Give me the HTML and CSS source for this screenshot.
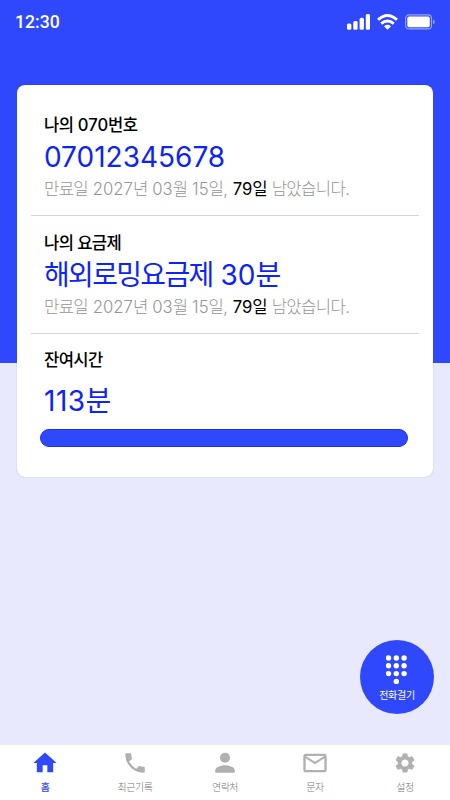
FILE: index.html
```
<!DOCTYPE html>
<html lang="ko">
<head>
<meta charset="utf-8">
<meta name="viewport" content="width=device-width, initial-scale=1">
<title>홈</title>
<link rel="stylesheet" href="styles.css">
</head>
<body>
<div class="app">
  <header class="status">
    <span class="clock">12:30</span>
    <svg class="status-icons" width="90" height="20" viewBox="0 0 90 20">
      <g fill="#fff">
        <rect x="2" y="11.500" width="4.400" height="6.200" rx="1.500"/>
        <rect x="8.300" y="9" width="4.300" height="8.700" rx="1.500"/>
        <rect x="14.600" y="5.700" width="4.300" height="12" rx="1.500"/>
        <rect x="20.800" y="2" width="4.200" height="15.700" rx="1.500"/>
      </g>
      <g fill="none" stroke="#fff" stroke-width="2.900">
        <path d="M33 7.700Q42.500 -.9 52 7.700"/>
        <path d="M36.200 11.700Q42.500 6.300 48.800 11.700"/>
      </g>
      <path d="M39 14.300Q42.500 11.400 46 14.300L42.500 17.800Z" fill="#fff"/>
      <rect x="60.600" y="2.900" width="25.900" height="14" rx="3.500" fill="none" stroke="#fff" stroke-opacity=".5" stroke-width="1.100"/>
      <rect x="62.300" y="4.600" width="22.500" height="10.600" rx="1.800" fill="#fff"/>
      <path d="M88 7.500Q89.800 8.300 89.800 9.900T88 12.300Z" fill="#fff" fill-opacity=".5"/>
    </svg>
  </header>
  <main class="card">
    <section class="info">
      <h2 class="label"><span class="ko">나의</span> 070<span class="ko">번호</span></h2>
      <p class="value number">07012345678</p>
      <p class="expiry"><span class="ko">만료일</span> 2027<span class="ko">년</span> 03<span class="ko">월</span> 15<span class="ko">일</span>, <b>79<span class="ko">일</span></b> <span class="ko">남았습니다</span>.</p>
    </section>
    <section class="info">
      <h2 class="label"><span class="ko">나의 요금제</span></h2>
      <p class="value"><span class="ko">해외로밍요금제</span> 30<span class="ko">분</span></p>
      <p class="expiry"><span class="ko">만료일</span> 2027<span class="ko">년</span> 03<span class="ko">월</span> 15<span class="ko">일</span>, <b>79<span class="ko">일</span></b> <span class="ko">남았습니다</span>.</p>
    </section>
    <section class="info remaining">
      <h2 class="label"><span class="ko">잔여시간</span></h2>
      <p class="value">113<span class="ko">분</span></p>
      <div class="bar"></div>
    </section>
  </main>
  <button class="dial">
    <svg width="22" height="30" viewBox="0 0 22 30" fill="#fff">
      <circle cx="2.500" cy="3" r="2.700"/><circle cx="10.300" cy="3" r="2.700"/><circle cx="18.100" cy="3" r="2.700"/>
      <circle cx="2.500" cy="10.800" r="2.700"/><circle cx="10.300" cy="10.800" r="2.700"/><circle cx="18.100" cy="10.800" r="2.700"/>
      <circle cx="2.500" cy="18.600" r="2.700"/><circle cx="10.300" cy="18.600" r="2.700"/><circle cx="18.100" cy="18.600" r="2.700"/>
      <circle cx="10.300" cy="26.400" r="2.700"/>
    </svg>
    <span>전화걸기</span>
  </button>
  <nav class="tabs">
    <a class="tab active"><svg viewBox="0 0 24 24"><path d="M10 20v-6h4v6h5v-8h3L12 3 2 12h3v8z"/></svg><span>홈</span></a>
    <a class="tab"><svg class="phone" viewBox="0 0 24 24"><path d="M20.010 15.380c-1.230 0-2.420-.2-3.530-.560-.350-.120-.740-.030-1.010.240l-2.200 2.200c-2.830-1.440-5.150-3.750-6.590-6.590l2.200-2.200c.280-.280.360-.670.250-1.020C8.760 6.340 8.560 5.150 8.560 3.920c0-.550-.450-.920-1-.920H4c-.550 0-1 .45-1 1 0 9.390 7.610 17 17 17 .55 0 1-.45 1-1v-3.630c0-.54-.45-.99-.99-.99z"/></svg><span>최근기록</span></a>
    <a class="tab"><svg class="person" viewBox="0 0 24 24"><circle cx="12" cy="7.200" r="4.600"/><path d="M3 21v-2.300c0-3.300 6-4.600 9-4.600s9 1.300 9 4.600V21z"/></svg><span>연락처</span></a>
    <a class="tab"><svg class="mail" viewBox="0 0 24 24"><path d="M22 6c0-1.100-.9-2-2-2H4c-1.100 0-2 .9-2 2v12c0 1.100.9 2 2 2h16c1.100 0 2-.9 2-2V6zm-2 0l-8 5-8-5h16zm0 12H4V8l8 5 8-5v10z"/></svg><span>문자</span></a>
    <a class="tab"><svg class="gear" viewBox="0 0 24 24"><path d="M19.140 12.940c.040-.3.060-.610.060-.940 0-.320-.020-.640-.070-.940l2.030-1.580c.180-.140.230-.410.120-.610l-1.920-3.320c-.120-.220-.370-.290-.590-.220l-2.390.960c-.5-.380-1.030-.7-1.620-.940l-.360-2.540c-.040-.240-.240-.410-.480-.410h-3.840c-.240 0-.430.170-.470.410l-.360 2.540c-.590.240-1.130.570-1.620.940l-2.390-.960c-.220-.080-.470 0-.590.220L2.740 8.870c-.120.210-.080.470.120.610l2.030 1.580c-.050.300-.090.630-.090.940s.020.640.070.940l-2.030 1.580c-.180.140-.230.410-.120.610l1.920 3.320c.120.220.370.290.590.220l2.390-.960c.5.380 1.030.7 1.620.940l.360 2.540c.050.240.240.410.480.410h3.840c.240 0 .440-.170.470-.410l.360-2.540c.590-.240 1.130-.560 1.620-.940l2.390.960c.220.080.470 0 .590-.220l1.920-3.320c.120-.220.070-.470-.120-.610l-2.010-1.580zM12 15.600c-1.980 0-3.600-1.620-3.600-3.600s1.620-3.600 3.600-3.600 3.600 1.620 3.600 3.600-1.620 3.600-3.600 3.600z"/></svg><span>설정</span></a>
  </nav>
</div>
</body>
</html>
```

FILE: styles.css
```
* { box-sizing: border-box; margin: 0; padding: 0; }
body { font-family: Inter, "Noto Sans CJK KR", sans-serif; color: #000; }
.app {
  position: relative;
  display: flex;
  flex-direction: column;
  height: 800px;
  background: linear-gradient(#3048fb 363px, #e8e9fc 363px);
}
.status {
  height: 85px;
  padding: 12px 15px 0;
  display: flex;
  justify-content: space-between;
  align-items: flex-start;
}
.clock { font: 500 17.600px/20px Roboto, sans-serif; color: #fff; }
.card {
  height: 392px;
  margin: 0 17px;
  padding: 0 14px;
  background: #fff;
  border-radius: 8px;
  box-shadow: 0 0 1px rgba(0, 0, 0, .35);
}
.info {
  height: 118px;
  padding: 15px 13px 0;
  border-bottom: 1px solid #d6d6d6;
  white-space: nowrap;
}
.info:first-child { height: 131px; padding-top: 28px; }
.ko { letter-spacing: -.06em; }
.label { font-size: 16.600px; font-weight: 500; line-height: 24px; }
.label .ko { letter-spacing: -.036em; }
.value { font-size: 28px; line-height: 38px; margin-top: 1px; color: #0d24f8; }
.expiry { font-size: 16.700px; font-weight: 300; line-height: 24px; margin-top: 1px; color: #959595; }
.expiry .ko { letter-spacing: -.04em; }
.expiry b { font-weight: 400; color: #000; }
.info.remaining { border: 0; height: auto; padding-top: 14px; }
.remaining .value { margin-top: 10px; letter-spacing: .5px; }
.bar {
  height: 18px;
  margin: 9px -2px 0 -4px;
  border-radius: 9px;
  background: #3048fb;
  border: 1px solid #1b30ed;
}
.dial {
  position: absolute;
  left: 360px;
  top: 640px;
  width: 74px;
  height: 74px;
  padding-top: 2px;
  border: 0;
  border-radius: 50%;
  background: #3048fb;
  color: #fff;
  font: 400 10px/14px "Noto Sans CJK KR", sans-serif;
  letter-spacing: -.3px;
  display: flex;
  flex-direction: column;
  align-items: center;
  justify-content: center;
  gap: 3px;
}
.tabs {
  margin-top: auto;
  height: 55px;
  display: grid;
  grid-template-columns: repeat(5, 1fr);
  background: #fff;
}
.tab {
  display: grid;
  grid-template-rows: 28px 14px;
  row-gap: 3px;
  place-items: center;
  align-content: start;
  padding-top: 4px;
  font: 300 10px/14px "Noto Sans CJK KR", sans-serif;
  letter-spacing: -.5px;
  color: #777;
}
.tab svg { width: 28px; height: 28px; fill: #b0b0b0; }
.tab .phone, .tab .person { width: 26px; height: 26px; }
.tab .gear { width: 24px; height: 24px; }
.tab.active { color: #3048fb; font-weight: 500; }
.tab.active svg { fill: #3048fb; }
```
